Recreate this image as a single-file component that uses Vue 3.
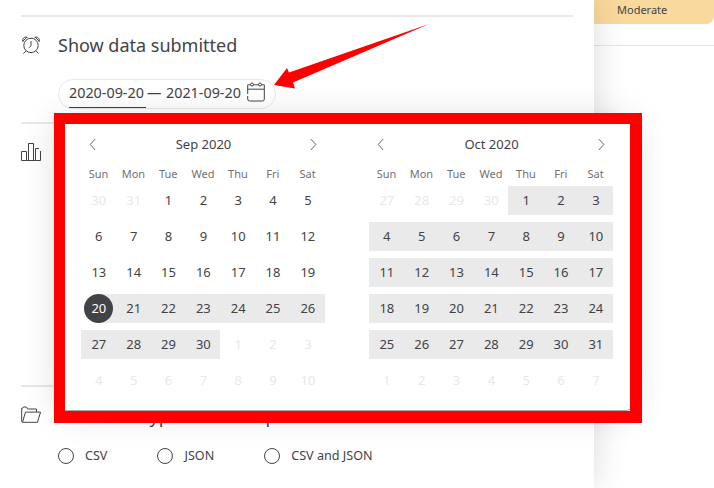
<script setup>
const weekdays = ['Sun', 'Mon', 'Tue', 'Wed', 'Thu', 'Fri', 'Sat']
function build(lead, count, selected) {
  const days = []
  lead.forEach(n => days.push({ n, muted: true }))
  for (let n = 1; n <= count; n++) days.push({ n, range: n >= selected, start: n === selected && selected > 1 })
  for (let n = 1; days.length < 42; n++) days.push({ n, muted: true })
  return Array.from({ length: 6 }, (_, i) => days.slice(i * 7, i * 7 + 7))
}
const months = [
  { title: 'Sep 2020', weeks: build([30, 31], 30, 20) },
  { title: 'Oct 2020', weeks: build([27, 28, 29, 30], 31, 1) }
]
const formats = ['CSV', 'JSON', 'CSV and JSON']
</script>

<template>
  <div class="page">
    <aside class="background">
      <div class="status">Moderate</div>
    </aside>
    <main class="panel">
      <section class="section dates">
        <svg class="icon" width="20" height="20" viewBox="0 0 20 20">
          <circle cx="10" cy="10.4" r="7.2" />
          <path d="M10 6v4.8l-2 2M5 16l-2.7 2.5M15 16l2.7 2.5M2 7C.8 3.8 3.2 1.2 6.5 2.4M18 7c1.2-3.2-1.2-5.8-4.5-4.6M2 6l4-4M18 6l-4-4" />
        </svg>
        <div class="content">
          <h2>Show data submitted</h2>
          <div class="range-input">
            <span class="from">2020-09-20</span><span class="dash">—</span><span class="to">2021-09-20</span>
            <svg class="calendar-icon" width="18" height="20" viewBox="0 0 18 20">
              <path d="M3.5 2.8H.7V12M.7 14v3q0 2 2 2h12.8q1.8 0 1.8-1.8V2.8h-2.8M6.5 2.8h5M.7 7.2h16.6" />
              <circle cx="5" cy="2.5" r="1.5" /><circle cx="13" cy="2.5" r="1.5" />
            </svg>
          </div>
        </div>
      </section>
      <section class="section chart">
        <svg class="icon" width="20" height="20" viewBox="0 0 20 20">
          <path d="M.5 9.5h5v9h-5zM7.5 1.5h5v17h-5zM18 6.5h-3.5v12h5V9M5.5 18.5h9" />
        </svg>
      </section>
      <section class="section files">
        <svg class="icon" width="20" height="18" viewBox="0 0 20 18">
          <path d="M1.3 16.2.7 15.5V2.2h1L2.5 1h3l1 2h9v3M1.5 16.3h15l3-10.2H4.5z" />
        </svg>
        <div class="content">
          <h2>Select file types in the export file</h2>
          <div class="formats">
            <label v-for="format in formats" :key="format"><i></i>{{ format }}</label>
          </div>
        </div>
      </section>
    </main>

    <div class="picker">
      <div v-for="month in months" :key="month.title" class="month">
        <header>
          <svg width="8" height="13" viewBox="0 0 8 13"><path d="M6.2 1 1.2 6.5l5 5.5" /></svg>
          <span>{{ month.title }}</span>
          <svg width="8" height="13" viewBox="0 0 8 13"><path d="m1.8 1 5 5.5-5 5.5" /></svg>
        </header>
        <div class="weekdays"><span v-for="day in weekdays" :key="day">{{ day }}</span></div>
        <div v-for="(week, i) in month.weeks" :key="i" class="week">
          <span v-for="(day, j) in week" :key="j" class="day" :class="{ muted: day.muted, range: day.range, start: day.start }"><b>{{ day.n }}</b></span>
        </div>
      </div>
    </div>
    <div class="outline"></div>
    <svg class="arrow" width="156" height="66" viewBox="0 0 156 66">
      <path d="M156 0 16 48.5l-2-4.5L1 61l21 3.5-2-6z" />
    </svg>
  </div>
</template>

<style>
body { margin: 0; overflow: hidden; background: #fff; }
</style>

<style scoped>
* { box-sizing: border-box; }
.page { position: relative; width: 714px; height: 488px; overflow: hidden; background: #fff; color: #424347; font: 13px/18px "Noto Sans", sans-serif; }
svg { fill: none; stroke: #424347; stroke-width: 1; flex: none; }
.background { position: absolute; left: 580px; top: 0; width: 134px; height: 46px; border-bottom: 1px solid #e6e6e6; }
.status { height: 24px; background: #fad99e; border-radius: 0 0 8px 0; font-size: 11px; line-height: 20px; padding-left: 37px; }
.panel { position: relative; width: 594px; height: 488px; padding: 15px 21px 0; background: #fff; box-shadow: 0 0 32px rgba(0,0,0,.15); }
.section { display: flex; gap: 17px; border-top: 2px solid #e8e8e8; }
.dates { height: 107px; padding-top: 16px; }
.dates .icon { margin-top: 2px; }
.chart { height: 263px; padding-top: 18px; }
.files { padding-top: 17px; }
.files .icon { margin-top: 2px; }
h2 { margin: 0; font-size: 18px; line-height: 24px; font-weight: 400; }
.range-input { display: flex; align-items: center; width: 218px; height: 30px; margin-top: 22px; padding: 0 10px; border: 1px solid #e8e8e8; border-radius: 15px; font-size: 14.35px; line-height: 26px; }
.range-input span { height: 28px; }
.range-input .from { width: 77px; border-bottom: 1px solid #424347; }
.dash { width: 20px; padding-left: 1px; }
.to { width: 80px; }
.calendar-icon { margin: -4px 0 0 1px; }
.formats { display: flex; gap: 50px; margin-top: 19px; }
.formats label { display: flex; align-items: center; gap: 11px; font-size: 12.6px; }
.formats i { width: 16px; height: 16px; border: 1px solid #424347; border-radius: 50%; }
.picker { position: absolute; left: 58px; top: 120px; width: 574px; height: 291px; padding: 15px 19px 0 23px; display: flex; gap: 44px; background: #fff; border-bottom: 1px solid #aaa; border-radius: 6px; box-shadow: 0 0 36px rgba(0,0,0,.16); }
.month { width: 244px; }
header { display: flex; justify-content: space-between; align-items: center; height: 18px; padding: 0 8px; }
header span { text-indent: 1px; }
header svg { stroke-width: .8; }
.weekdays, .week { display: grid; grid-template-columns: repeat(7, 34.85px); width: 244px; }
.weekdays { height: 30px; padding-top: 12px; font-size: 11px; text-align: center; text-indent: .3px; color: #707176; }
.week { height: 29px; margin-bottom: 7px; }
.week:nth-child(3) { margin-top: 3px; }
.day { text-align: center; text-indent: .8px; line-height: 28px; }
.day b { display: block; font-weight: 400; }
.muted { color: #e8e8e8; }
.range { background: #eaeaea; }
.start { background: linear-gradient(90deg, transparent 50%, #eaeaea 50%); }
.start b { width: 29px; height: 29px; margin: 0 auto; border-radius: 50%; background: #424347; color: #fff; }
.outline { position: absolute; left: 54px; top: 113px; width: 588px; height: 310px; border: 11px solid #f00; border-right-width: 12px; border-bottom-width: 12px; }
.arrow { position: absolute; left: 273px; top: 24px; }
.arrow path { fill: #f00; stroke: none; }
</style>
